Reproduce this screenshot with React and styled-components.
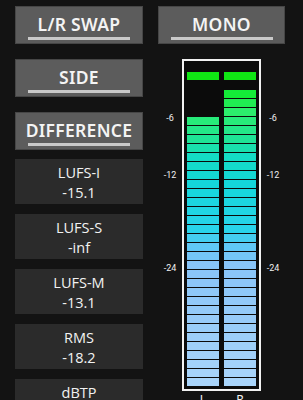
import React from 'react';
import styled, { createGlobalStyle } from 'styled-components';

const Global = createGlobalStyle`
  html, body {
    margin: 0;
    padding: 0;
    background: #131313;
    overflow: hidden;
  }
  body {
    font-family: "Noto Sans", "Open Sans", sans-serif;
    color: #fff;
  }
`;

const Page = styled.div`
  display: grid;
  grid-template-columns: 128px 127px;
  column-gap: 15px;
  padding: 6px 0 0 15px;
  height: 400px;
  box-sizing: border-box;
`;

const Column = styled.div`
  display: flex;
  flex-direction: column;
`;

const ButtonStack = styled.div`
  display: flex;
  flex-direction: column;
  gap: 15px;
`;

const ToggleButton = styled.div`
  height: 38px;
  box-sizing: border-box;
  background: #5c5c5c;
  border: 1px solid #464646;
  display: flex;
  flex-direction: column;
  align-items: center;
  padding-top: 6px;
`;

const ButtonLabel = styled.div`
  font-family: "Noto Sans", sans-serif;
  font-weight: 600;
  font-size: 17.5px;
  line-height: 22px;
  height: 22px;
  letter-spacing: 0.3px;
  color: #f4f4f4;
  white-space: nowrap;
`;

const ButtonBar = styled.div`
  margin-top: 2px;
  width: 102px;
  height: 3px;
  flex: none;
  background: #c9c9c9;
`;

const StatStack = styled.div`
  display: flex;
  flex-direction: column;
  gap: 10px;
  margin-top: 9px;
`;

const StatBox = styled.div`
  height: 45px;
  box-sizing: border-box;
  background: #2b2b2b;
  display: flex;
  flex-direction: column;
  align-items: center;
  padding-top: 4px;
  font-family: "Open Sans", sans-serif;
  font-size: 14.5px;
  line-height: 20px;
  color: #f2f2f2;
`;

const MeterArea = styled.div`
  position: relative;
  margin-top: 15px;
  display: flex;
  flex-direction: column;
  align-items: center;
`;

const Frame = styled.div`
  width: 79px;
  box-sizing: border-box;
  border: 2px solid #f2f2f2;
  background: #0b0b0b;
  padding: 11px 3px 3px 3px;
  display: flex;
  gap: 5px;
`;

const Bar = styled.div`
  width: 32px;
  display: flex;
  flex-direction: column;
  gap: 1px;
`;

const Slot = styled.div`
  height: 8px;
  background: ${p => p.$color || 'transparent'};
`;

const ScaleLabel = styled.div`
  position: absolute;
  width: 24px;
  text-align: center;
  font-family: "Roboto", sans-serif;
  font-size: 9px;
  line-height: 10px;
  color: #f0f0f0;
  top: ${p => p.$top}px;
  ${p => (p.$side === 'left' ? 'left: 0;' : 'right: 0;')}
`;

const ChannelRow = styled.div`
  display: flex;
  gap: 5px;
  margin-top: 2px;
`;

const ChannelLabel = styled.div`
  width: 32px;
  text-align: center;
  font-family: "Noto Sans", sans-serif;
  font-size: 12px;
  line-height: 14px;
  color: #f0f0f0;
`;

const stops = [
  [0, [20, 236, 56]],
  [2, [44, 238, 108]],
  [5, [30, 228, 150]],
  [7, [20, 220, 196]],
  [10, [20, 214, 218]],
  [15, [40, 212, 234]],
  [17, [96, 200, 246]],
  [19, [136, 196, 248]],
  [32, [168, 212, 250]],
];

const segColor = (i) => {
  for (let k = 0; k < stops.length - 1; k++) {
    const [a, ca] = stops[k];
    const [b, cb] = stops[k + 1];
    if (i >= a && i <= b) {
      const t = (i - a) / (b - a);
      const c = ca.map((v, j) => Math.round(v + (cb[j] - v) * t));
      return `rgb(${c.join(',')})`;
    }
  }
  return 'rgb(168,212,250)';
};

const SEGMENTS = 33;

const MeterBar = ({ lit }) => (
  <Bar>
    <Slot $color="#10e614" />
    <Slot />
    {Array.from({ length: SEGMENTS }, (_, i) => (
      <Slot key={i} $color={i >= SEGMENTS - lit ? segColor(i) : null} />
    ))}
  </Bar>
);

const buttons = ['L/R SWAP', 'SIDE', 'DIFFERENCE'];

const stats = [
  ['LUFS-I', '-15.1'],
  ['LUFS-S', '-inf'],
  ['LUFS-M', '-13.1'],
  ['RMS', '-18.2'],
  ['dBTP', '-4.9'],
];

const scale = [
  ['-6', 54],
  ['-12', 111],
  ['-24', 204],
];

const Toggle = ({ label }) => (
  <ToggleButton>
    <ButtonLabel>{label}</ButtonLabel>
    <ButtonBar />
  </ToggleButton>
);

export default function App() {
  return (
    <>
      <Global />
      <Page>
        <Column>
          <ButtonStack>
            {buttons.map(b => <Toggle key={b} label={b} />)}
          </ButtonStack>
          <StatStack>
            {stats.map(([name, value]) => (
              <StatBox key={name}>
                <div>{name}</div>
                <div>{value}</div>
              </StatBox>
            ))}
          </StatStack>
        </Column>
        <Column>
          <Toggle label="MONO" />
          <MeterArea>
            {scale.map(([t, top]) => (
              <React.Fragment key={t}>
                <ScaleLabel $side="left" $top={top}>{t}</ScaleLabel>
                <ScaleLabel $side="right" $top={top}>{t}</ScaleLabel>
              </React.Fragment>
            ))}
            <Frame>
              <MeterBar lit={30} />
              <MeterBar lit={33} />
            </Frame>
            <ChannelRow>
              <ChannelLabel>L</ChannelLabel>
              <ChannelLabel>R</ChannelLabel>
            </ChannelRow>
          </MeterArea>
        </Column>
      </Page>
    </>
  );
}
